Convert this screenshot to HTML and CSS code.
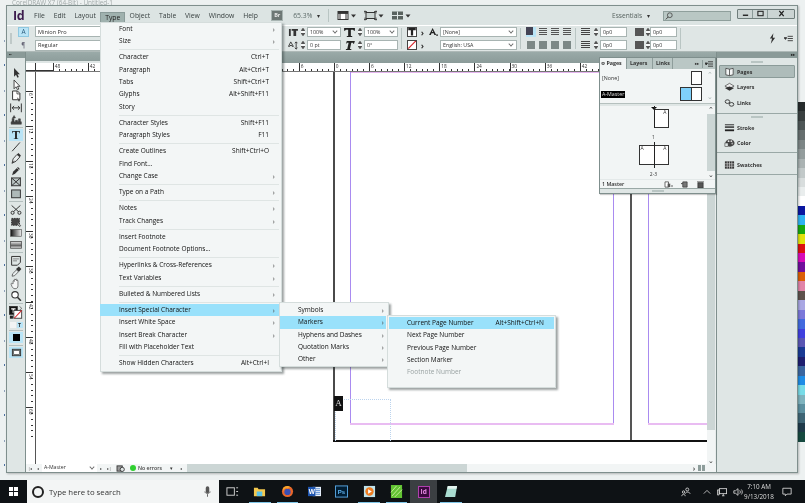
FILE: index.html
```html
<!DOCTYPE html>
<html lang="en">
<head>
<meta charset="utf-8">
<title>InDesign</title>
<link rel="stylesheet" href="styles.css">
</head>
<body>
<div class="desktop">
  <div class="behind-title">CorelDRAW X7 (64-Bit) - Untitled-1</div>
  <div class="left-strip"></div>
  <div class="palette">
    <i class="c1"></i><i class="c2"></i><i class="c3"></i><i class="c4"></i><i class="c5"></i><i class="c6"></i><i class="c7"></i><i class="c8"></i><i class="c9"></i><i class="c10"></i><i class="c11"></i>
    <i class="p1"></i><i class="p2"></i><i class="p3"></i><i class="p4"></i><i class="p5"></i><i class="p6"></i><i class="p7"></i><i class="p8"></i><i class="p9"></i><i class="p10"></i><i class="p11"></i><i class="p12"></i><i class="p13"></i><i class="p14"></i><i class="p15"></i><i class="p16"></i><i class="p17"></i><i class="p18"></i><i class="p19"></i><i class="p20"></i><i class="p21"></i><i class="p22"></i><i class="p23"></i><i class="p24"></i><i class="p25"></i>
  </div>

  <div class="window">
    <div class="menubar">
      <span class="logo">Id</span>
      <nav class="topmenu">
        <span>File</span><span>Edit</span><span>Layout</span><span class="open">Type</span><span>Object</span><span>Table</span><span>View</span><span>Window</span><span>Help</span>
      </nav>
      <span class="br">Br</span>
      <span class="zoomval">65.3%</span><span class="caret">▾</span>
      <span class="vsep"></span>
      <svg class="barico" viewBox="0 0 20 10"><rect x="1" y="1" width="10" height="8" fill="#fff" stroke="#333"/><rect x="1" y="1" width="10" height="2.4" fill="#333"/><path d="M3 1v8M9 1v8" stroke="#333"/><path d="M14 4h5l-2.5 3z" fill="#333"/></svg>
      <svg class="barico" viewBox="0 0 20 10"><rect x="2" y="2" width="9" height="6" fill="#ccd5d3" stroke="#333"/><path d="M0 1h3M0 9h3M10 1h3M10 9h3M1 0v3M1 7v3M12 0v3M12 7v3" stroke="#333" stroke-width=".8"/><path d="M14.5 4h5l-2.5 3z" fill="#333"/></svg>
      <svg class="barico" viewBox="0 0 20 10"><rect x="1" y="1" width="11" height="8" fill="#59625f"/><path d="M6.5 1v8M1 5h11" stroke="#dfe6e5"/><path d="M14.5 4h5l-2.5 3z" fill="#333"/></svg>
      <span class="spacer"></span>
      <span class="essentials">Essentials</span><span class="caret">▾</span>
      <span class="search"><svg viewBox="0 0 10 10"><circle cx="6" cy="4" r="3" fill="none" stroke="#444"/><path d="M4 6.2 1 9.2" stroke="#444" stroke-width="1.2"/></svg></span>
      <span class="winbtns">
        <span><svg viewBox="0 0 10 8"><path d="M2 6h6" stroke="#222" stroke-width="1.6"/></svg></span>
        <span><svg viewBox="0 0 10 8"><rect x="2" y="1.5" width="6" height="5" fill="none" stroke="#222" stroke-width="1.2"/></svg></span>
        <span class="wide"><svg viewBox="0 0 10 8"><path d="M2.5 1l5 6M7.5 1l-5 6" stroke="#222" stroke-width="1.5"/></svg></span>
      </span>
    </div>

    <div class="control">
      <div class="cgroup paramode">
        <span class="grip"></span>
        <div class="stack"><span class="modebtn on">A</span><span class="modebtn">¶</span></div>
      </div>
      <div class="stack fontboxes"><span class="field">Minion Pro</span><span class="field">Regular</span></div>
      <div class="stack c-a">
        <div class="crow"><svg class="t-ic" viewBox="0 0 11 10"><path d="M1 1h2v8H1zM4 1h7v2H9v6H6V3H4z" fill="#333"/></svg><span class="spin"></span><span class="field sm dd">100%<u></u></span></div>
        <div class="crow"><svg class="t-ic" viewBox="0 0 11 10"><path d="M3 1l-2.500 5h1.300l.4-1h2l.4 1h1.300zM9 1v8M7.500 7.500 9 9l1.500-1.500M7.500 2.500 9 1l1.500 1.500" fill="none" stroke="#333"/></svg><span class="spin"></span><span class="field sm">0 pt</span></div>
      </div>
      <div class="stack c-b">
        <div class="crow"><svg class="t-ic big" viewBox="0 0 12 10"><path d="M0 0h12v3h-1l-1-1H7.500v7H9v1H3V9h1.500V2H2L1 3H0z" fill="#222"/></svg><span class="spin"></span><span class="field sm dd">100%<u></u></span></div>
        <div class="crow"><svg class="t-ic big" viewBox="0 0 12 10"><path d="M3 0h9l-1 3h-1V2H8L6.500 9H8v1H2V9h1.500L5 2H3L2.500 3H2z" fill="#222"/></svg><span class="spin"></span><span class="field sm">0°</span></div>
      </div>
      <span class="vsep ctl"></span>
      <div class="stack c-c">
        <div class="crow"><span class="tbox"><svg viewBox="0 0 8 8"><path d="M0 0h8v2.500H5.200V8H2.800V2.500H0z" fill="#222"/></svg></span><span class="chev">›</span></div>
        <div class="crow"><span class="tbox"><svg viewBox="0 0 8 8"><path d="M0 8 8 0" stroke="#d8262c" stroke-width="1.200"/></svg></span><span class="chev">›</span></div>
      </div>
      <div class="stack c-d">
        <div class="crow"><svg class="t-ic aic" viewBox="0 0 10 9"><path d="M4 0 0 8h2l.8-2h2.400l.8 2h2zM3.300 4.500 4 2.500l.7 2z" fill="#222"/><circle cx="9" cy="8" r="1" fill="#222"/></svg><span class="field dd wide2">[None]<u></u></span></div>
        <div class="crow"><span class="aic-gap"></span><span class="field dd wide2">English: USA<u></u></span></div>
      </div>
      <span class="vsep ctl"></span>
      <div class="aligns">
        <i class="on"></i><i></i><i></i><i></i><i class="solid"></i><i class="solid"></i><i class="solid"></i><i class="solid"></i>
      </div>
      <span class="vsep ctl"></span>
      <div class="stack c-e">
        <div class="crow"><i class="ind"></i><span class="spin"></span><span class="field md">0p0</span><i class="ind i2"></i><span class="spin s2"></span><span class="field md">0p0</span></div>
        <div class="crow"><i class="ind"></i><span class="spin"></span><span class="field md">0p0</span><i class="ind i2"></i><span class="spin s2"></span><span class="field md">0p0</span></div>
      </div>
      <span class="vsep ctl"></span>
      <span class="spacer"></span>
      <svg class="bolt" viewBox="0 0 8 12"><path d="M5 0 1 6h2.500L2 12l5-7H4.300z" fill="#333"/></svg>
      <svg class="cmenu" viewBox="0 0 10 8"><path d="M0 3h3L1.500 5zM4 1.500h6M4 4h6M4 6.500h6" stroke="#333" fill="#333" stroke-width="1"/></svg>
    </div>

    <div class="workspace">
      <aside class="tools">
        <div class="dockhead"><b>••</b></div>
        <div class="tool-list">
          <svg class="tl" viewBox="0 0 12 12"><path d="M4 1v9l2-2 1.500 3 1.400-.7L7.500 7.500H10z" fill="#333"/></svg>
          <svg class="tl" viewBox="0 0 12 12"><path d="M4 1v9l2-2 1.500 3 1.400-.7L7.500 7.500H10z" fill="#fff" stroke="#333" stroke-width=".9"/></svg>
          <svg class="tl" viewBox="0 0 12 12"><path d="M2.500 1h5L10 3.500V10H2.500z" fill="#fff" stroke="#333"/><path d="M7 1v3h3M7 8l3 2.500-1.500.1.600 1.200" fill="none" stroke="#333" stroke-width=".8"/></svg>
          <svg class="tl" viewBox="0 0 12 12"><path d="M.5 1.500v9M11.500 1.500v9M2 6h8M2 6l2-2M2 6l2 2M10 6 8 4M10 6 8 8" fill="none" stroke="#333"/></svg>
          <svg class="tl" viewBox="0 0 12 12"><path d="M1 10.500h10.500V8H1zM2 8V4.500h2V8M5.500 8V6.500h2V8M8.500 8V5h2v3M4 1.500 2.500 4h3z" fill="#444" stroke="#333" stroke-width=".5"/></svg>
          <span class="tsep"></span>
          <span class="tl tbtn">T</span>
          <svg class="tl" viewBox="0 0 12 12"><path d="M2 10.500 10 1.500" stroke="#333"/></svg>
          <svg class="tl" viewBox="0 0 12 12"><path d="M2 10.500 3 6l4-4.500L10 4 6 8.500zM2 10.500l2.500-2.500" fill="#e8eded" stroke="#333" stroke-width=".9"/><path d="M7 1.500 8.500 0l2.500 2.500L10 4z" fill="#333"/></svg>
          <svg class="tl" viewBox="0 0 12 12"><path d="M2 10.500 3 7l5-5 2 2-5 5z" fill="#333"/><path d="M7 3l2 2" stroke="#fff" stroke-width=".6"/></svg>
          <svg class="tl" viewBox="0 0 12 12"><rect x="1.500" y="2" width="9" height="8" fill="#bcc6c5" stroke="#333"/><path d="M1.500 2l9 8M10.500 2l-9 8" stroke="#333"/></svg>
          <svg class="tl" viewBox="0 0 12 12"><rect x="1.500" y="2" width="9" height="8" fill="#aeb9b8" stroke="#333"/></svg>
          <span class="tsep"></span>
          <svg class="tl" viewBox="0 0 12 12"><circle cx="9.500" cy="9" r="1.600" fill="none" stroke="#333"/><circle cx="2.500" cy="9" r="1.600" fill="none" stroke="#333"/><path d="M3.500 7.800 10.500 1.500M8.500 7.800 1.500 1.500" stroke="#333"/></svg>
          <svg class="tl" viewBox="0 0 12 12"><rect x="1.500" y="2.500" width="8" height="7" fill="#444" stroke="#333" stroke-dasharray="1.500 1"/><path d="M7 6l4 4-1.600.1.600 1.400" fill="#fff" stroke="#222" stroke-width=".6"/></svg>
          <svg class="tl" viewBox="0 0 12 12"><defs><linearGradient id="g1"><stop offset="0" stop-color="#111"/><stop offset="1" stop-color="#eee"/></linearGradient><linearGradient id="g2" x1="0" x2="0" y1="0" y2="1"><stop offset="0" stop-color="#eee"/><stop offset=".6" stop-color="#666"/><stop offset="1" stop-color="#eee"/></linearGradient></defs><rect x=".5" y="2.500" width="11" height="7" fill="url(#g1)" stroke="#444" stroke-width=".6"/></svg>
          <svg class="tl" viewBox="0 0 12 12"><rect x=".5" y="2.500" width="11" height="7" fill="url(#g2)" stroke="#444" stroke-width=".8"/></svg>
          <span class="tsep"></span>
          <svg class="tl" viewBox="0 0 12 12"><path d="M1.500 1.500h9v6l-3 3h-6z" fill="#dfe6e5" stroke="#333"/><path d="M3 4h6M3 6h4" stroke="#555" stroke-width=".7"/></svg>
          <svg class="tl" viewBox="0 0 12 12"><path d="M2 10.500 2.500 8 6.500 4 8.500 6 4.500 10z" fill="#e8eded" stroke="#333" stroke-width=".7"/><path d="M6 3 9 0.500 11.500 3 9 6z" fill="#333"/></svg>
          <svg class="tl" viewBox="0 0 12 12"><path d="M3 6V3.500c0-1 1.200-1 1.200 0V2c0-1 1.300-1 1.300 0v-.2c0-1 1.300-1 1.300 0V3c0-1 1.200-1 1.200 0v5c0 2-1 3-3 3-1.700 0-2.300-1-3-2L1 6.500C.6 5.500 2 5 2.500 6z" fill="#f4f6f6" stroke="#444" stroke-width=".7"/></svg>
          <svg class="tl" viewBox="0 0 12 12"><circle cx="5" cy="5" r="3.300" fill="#fff" stroke="#333" stroke-width="1.100"/><path d="M7.500 7.500l3.500 3.500" stroke="#333" stroke-width="1.600"/></svg>
          <span class="tsep"></span>
          <svg class="tl-fs" viewBox="0 0 16 16"><rect x=".5" y=".5" width="9" height="9" fill="#111" stroke="#333"/><path d="M2.500 2.500h5v1.500H5.800v4H4.200V4H2.500z" fill="#fff"/><rect x="5.500" y="5" width="9" height="9" fill="#fff" stroke="#333"/><path d="M6 14 14.500 5" stroke="#d8262c" stroke-width="1.200"/><path d="M12 .5l2.500 2-2 2" fill="none" stroke="#333" stroke-width=".7"/><rect x="1" y="11" width="3.500" height="3.500" fill="#222"/></svg>
          <div class="modes"><i></i><i class="t">T</i></div>
          <span class="tsep"></span>
          <span class="tl hi"><b class="blk"></b></span>
          <span class="tsep"></span>
          <span class="tl hi"><svg viewBox="0 0 12 12"><rect x="1.500" y="2.500" width="9" height="7" fill="#9aa6a5" stroke="#333"/><rect x="3" y="4" width="6" height="4" fill="#fff" stroke="#333" stroke-width=".6"/></svg></span>
        </div>
      </aside>

      <section class="docpane">
        <div class="tabbar"><span class="doctab">*Untitled-1 @ 65%<em>×</em></span></div>
        <div class="hruler">
          <span class="origin"></span>
          <span class="rc">48</span><span class="rc">42</span><span class="rc"></span><span class="rc"></span><span class="rc"></span><span class="rc"></span><span class="rc"></span><span class="rc">6</span><span class="rc">0</span><span class="rc">6</span><span class="rc">12</span><span class="rc">18</span><span class="rc">24</span><span class="rc">30</span><span class="rc">36</span><span class="rc">42</span><span class="rc"></span><span class="rc"></span>
        </div>
        <div class="docmain">
          <div class="vruler">
            <span class="vc">6</span><span class="vc">12</span><span class="vc">18</span><span class="vc">24</span><span class="vc">30</span><span class="vc">36</span><span class="vc">42</span><span class="vc">48</span><span class="vc">54</span><span class="vc">60</span>
          </div>
          <div class="canvas">
            <span class="pg-left"></span><span class="pg-mid"></span><span class="pg-bottom"></span>
            <span class="m-top"></span><span class="m-l1"></span><span class="m-r1"></span><span class="m-l2"></span><span class="m-b1"></span><span class="m-b2"></span>
            <span class="frame"></span>
            <span class="amark">A</span>
          </div>
          <div class="vscroll"><span class="track"></span><span class="vchev">⌄</span></div>
        </div>
        <div class="status">
          <span class="pagebtns">|◂</span><span class="pagebtns">◂</span>
          <span class="pagebox">A-Master<u></u></span>
          <span class="pagebtns">▸</span><span class="pagebtns">▸|</span>
          <svg class="docic" viewBox="0 0 10 8"><rect x="1" y="1" width="6" height="6" fill="#999" stroke="#333"/><circle cx="7" cy="5" r="2.400" fill="#dfe6e5" stroke="#333"/></svg>
          <span class="greendot"></span><span class="noerr">No errors</span><span class="caret st">▾</span><span class="pagebtns st2">◂</span>
          <span class="hscroll"></span>
          <span class="pagebtns st3">›</span><span class="split"><i></i><i></i></span>
        </div>
      </section>

      <aside class="dock">
        <div class="dockhead right"><b>▸▸</b></div>
        <div class="dgroup first">
          <span class="handle"></span>
          <div class="ditem active"><svg viewBox="0 0 12 10"><path d="M6 2 2 1v7l4 1 4-1V1zM6 2v7" fill="#f4f6f6" stroke="#333" stroke-width=".8"/></svg>Pages</div>
          <div class="ditem"><svg viewBox="0 0 12 10"><path d="M6 1 1 4l5 2.500L11 4z" fill="#eee" stroke="#333" stroke-width=".7"/><path d="M1 6l5 3 5-3-5-1.500z" fill="#333"/></svg>Layers</div>
          <div class="ditem"><svg viewBox="0 0 12 10"><ellipse cx="3.800" cy="3.500" rx="2.500" ry="2" fill="none" stroke="#333"/><ellipse cx="8.200" cy="6.500" rx="2.500" ry="2" fill="none" stroke="#333"/></svg>Links</div>
        </div>
        <div class="dgroup">
          <span class="handle"></span>
          <div class="ditem"><svg viewBox="0 0 12 10"><path d="M1 1.500h10" stroke="#222"/><path d="M1 4h10" stroke="#222" stroke-width="1.500"/><path d="M1 7.500h10" stroke="#222" stroke-width="2"/></svg>Stroke</div>
          <div class="ditem"><svg viewBox="0 0 12 10"><ellipse cx="6.500" cy="5" rx="5" ry="4" fill="#444"/><circle cx="5" cy="3" r="1" fill="#eee"/><circle cx="8" cy="3" r="1" fill="#ddd"/><circle cx="9" cy="5.500" r="1" fill="#aaa"/><rect x="1" y="5" width="3.500" height="4" fill="#dfe6e5" stroke="#333" stroke-width=".6"/></svg>Color</div>
        </div>
        <div class="dgroup">
          <span class="handle none"></span>
          <div class="ditem"><svg viewBox="0 0 12 10"><rect x="1" y="1" width="10" height="8" fill="#333"/><path d="M1 3.700h10M1 6.300h10M3.500 1v8M6 1v8M8.500 1v8" stroke="#ddd" stroke-width=".7"/></svg>Swatches</div>
        </div>
      </aside>
    </div>
  </div>

  <div class="pagespanel">
    <div class="ptabs">
      <span class="ptab on">≎ Pages</span><span class="ptab">Layers</span><span class="ptab">Links</span>
      <span class="spacer"></span><span class="pmore">▸▸</span><span class="pbar"></span>
      <svg class="pmenu" viewBox="0 0 8 6"><path d="M0 2h2.500L1.200 4zM3 .8h5M3 3h5M3 5.200h5" stroke="#333" stroke-width=".9" fill="#333"/></svg>
    </div>
    <div class="masters">
      <div class="mrow"><span class="mname">[None]</span><span class="swatch"></span></div>
      <div class="mrow"><span class="mname sel">A-Master</span><span class="swatch blue"></span><span class="swatch"></span></div>
      <span class="mscroll up">⌃</span><span class="mscroll down">⌄</span>
    </div>
    <div class="pagesarea">
      <div class="pagelist">
        <span class="tri"></span>
        <div class="spread single"><span class="pp r"><em>A</em></span></div>
        <span class="plabel">1</span>
        <div class="spread double"><span class="pp l"><em>A</em></span><span class="pp r"><em>A</em></span></div>
        <span class="plabel">2-3</span>
      </div>
      <div class="pscroll"><span class="arr">⌃</span><span class="th"></span><span class="arr">⌄</span></div>
    </div>
    <div class="pfoot">
      <span>1 Master</span><span class="spacer"></span>
      <svg viewBox="0 0 10 8"><path d="M1 1h4v6H1z" fill="#fff" stroke="#333" stroke-width=".8"/><path d="M4 3h3v4H4z" fill="#555"/><path d="M8 5h2L9 7z" fill="#333"/></svg>
      <svg viewBox="0 0 10 8"><path d="M3 1h5v6H3z" fill="#777" stroke="#333" stroke-width=".8"/><path d="M1 3h2" stroke="#333"/></svg>
      <svg viewBox="0 0 10 8"><path d="M2 2h6v6H2zM1 1h8" fill="#555" stroke="#333" stroke-width=".8"/></svg>
    </div>
    <span class="phandle"></span>
  </div>

  <div class="menu m-main">
    <div class="mi"><span>Font</span><b>›</b></div>
    <div class="mi"><span>Size</span><b>›</b></div>
    <hr>
    <div class="mi"><span>Character</span><kbd>Ctrl+T</kbd></div>
    <div class="mi"><span>Paragraph</span><kbd>Alt+Ctrl+T</kbd></div>
    <div class="mi"><span>Tabs</span><kbd>Shift+Ctrl+T</kbd></div>
    <div class="mi"><span>Glyphs</span><kbd>Alt+Shift+F11</kbd></div>
    <div class="mi"><span>Story</span></div>
    <hr>
    <div class="mi"><span>Character Styles</span><kbd>Shift+F11</kbd></div>
    <div class="mi"><span>Paragraph Styles</span><kbd>F11</kbd></div>
    <hr>
    <div class="mi"><span>Create Outlines</span><kbd>Shift+Ctrl+O</kbd></div>
    <div class="mi"><span>Find Font...</span></div>
    <div class="mi"><span>Change Case</span><b>›</b></div>
    <hr>
    <div class="mi"><span>Type on a Path</span><b>›</b></div>
    <hr>
    <div class="mi"><span>Notes</span><b>›</b></div>
    <div class="mi"><span>Track Changes</span><b>›</b></div>
    <hr>
    <div class="mi"><span>Insert Footnote</span></div>
    <div class="mi"><span>Document Footnote Options...</span></div>
    <hr>
    <div class="mi"><span>Hyperlinks &amp; Cross-References</span><b>›</b></div>
    <div class="mi"><span>Text Variables</span><b>›</b></div>
    <hr>
    <div class="mi"><span>Bulleted &amp; Numbered Lists</span><b>›</b></div>
    <hr>
    <div class="mi hl"><span>Insert Special Character</span><b>›</b></div>
    <div class="mi"><span>Insert White Space</span><b>›</b></div>
    <div class="mi"><span>Insert Break Character</span><b>›</b></div>
    <div class="mi"><span>Fill with Placeholder Text</span></div>
    <hr>
    <div class="mi"><span>Show Hidden Characters</span><kbd>Alt+Ctrl+I</kbd></div>
  </div>

  <div class="menu m-sub1">
    <div class="mi"><span>Symbols</span><b>›</b></div>
    <div class="mi hl"><span>Markers</span><b>›</b></div>
    <div class="mi"><span>Hyphens and Dashes</span><b>›</b></div>
    <div class="mi"><span>Quotation Marks</span><b>›</b></div>
    <div class="mi"><span>Other</span><b>›</b></div>
  </div>

  <div class="menu m-sub2">
    <div class="mi hl"><span>Current Page Number</span><kbd>Alt+Shift+Ctrl+N</kbd></div>
    <div class="mi"><span>Next Page Number</span></div>
    <div class="mi"><span>Previous Page Number</span></div>
    <div class="mi"><span>Section Marker</span></div>
    <div class="mi dis"><span>Footnote Number</span></div>
  </div>

  <footer class="taskbar">
    <span class="start"><svg viewBox="0 0 10 10"><path d="M0 0h4.500v4.500H0zM5.500 0H10v4.500H5.500zM0 5.500h4.500V10H0zM5.500 5.500H10V10H5.500z" fill="#fff"/></svg></span>
    <div class="tsearch">
      <span class="cortana"></span>
      <span class="tstext">Type here to search</span>
      <span class="spacer"></span>
      <svg class="mic" viewBox="0 0 8 12"><rect x="2" y="0" width="4" height="8" rx="2" fill="#555"/><path d="M1 6c0 3 6 3 6 0M4 9v3" fill="none" stroke="#555"/></svg>
    </div>
    <div class="apps">
      <span class="app"><svg viewBox="0 0 14 12"><rect x="1" y="2" width="8" height="8" fill="none" stroke="#d5d5d5"/><path d="M11 2h2M11 6h2M11 10h2" stroke="#d5d5d5"/></svg></span>
      <span class="app run"><svg viewBox="0 0 14 12"><path d="M1 2h4l1 1.500h7V11H1z" fill="#f3c84e"/><rect x="4" y="6" width="6" height="5" fill="#5cc3e8"/></svg></span>
      <span class="app run"><svg viewBox="0 0 14 14"><circle cx="7" cy="7" r="6" fill="#e8662a"/><circle cx="7" cy="7.500" r="3.400" fill="#3a4fb4"/><path d="M2 4c1-3 6-4 9-1-2-.7-3 0-3.500 1C5 3 3 4 3 7z" fill="#f7a52b"/></svg></span>
      <span class="app"><svg viewBox="0 0 14 14"><rect x="5" y="2" width="9" height="10" fill="#e8f0fa"/><path d="M8 4h5M8 6h5M8 8h5M8 10h5" stroke="#5b8fd6"/><rect x="0" y="2" width="8" height="10" fill="#1f56b0"/><text x="4" y="9.500" class="wtxt">W</text></svg></span>
      <span class="app"><svg viewBox="0 0 14 14"><rect x=".5" y="1" width="13" height="12" fill="#001d33" stroke="#5aa9e6"/><text x="7" y="9.800" class="pstxt">Ps</text></svg></span>
      <span class="app run"><svg viewBox="0 0 14 14"><rect x="1" y="1" width="12" height="12" fill="#bfe3ec"/><circle cx="7" cy="7" r="4.500" fill="#ee7d22"/><path d="M5.500 4.500v5L9.500 7z" fill="#fff"/></svg></span>
      <span class="app run"><svg viewBox="0 0 14 14"><rect x="1" y="0" width="12" height="14" fill="#62c333"/><path d="M2 12 11 2M5 13 13 5M1 8l6-7" stroke="#c7ef9a" stroke-width="1"/></svg></span>
      <span class="app active"><span class="idapp">Id</span></span>
      <span class="app run"><svg viewBox="0 0 14 14"><path d="M3 1h10l-2 12H0z" fill="#a9dcd0"/><path d="M3 1h10l-.6 3H2.300z" fill="#e4f5f0"/></svg></span>
    </div>
    <span class="spacer"></span>
    <div class="tray">
      <svg class="tr-i" viewBox="0 0 12 12"><circle cx="7.500" cy="3" r="1.800" fill="none" stroke="#ddd"/><circle cx="3" cy="6" r="1.400" fill="none" stroke="#ddd"/><path d="M1 11c0-3 4-3 4 0M5 8c.5-2.500 5-2.500 6 0" fill="none" stroke="#ddd"/></svg>
      <svg class="tr-i chevup" viewBox="0 0 10 10"><path d="M1 7l4-4 4 4" fill="none" stroke="#ddd"/></svg>
      <svg class="tr-i" viewBox="0 0 12 12"><rect x="3" y="2" width="8.500" height="6" fill="none" stroke="#ddd"/><path d="M6 10.500h3M7.500 8v2.500M.5 3.500h2v6h-2z" fill="none" stroke="#ddd"/></svg>
      <svg class="tr-i" viewBox="0 0 12 12"><path d="M1 4.500h2l3-2.500v8L3 7.500H1z" fill="none" stroke="#ddd"/><path d="M8 4c1 1 1 3 0 4M10 3c1.500 1.500 1.500 4.500 0 6" fill="none" stroke="#ddd"/></svg>
      <div class="clock"><span>7:10 AM</span><span>9/13/2018</span></div>
      <svg class="tr-i note" viewBox="0 0 12 12"><path d="M1 1.500h10v7H6l-2 2v-2H1z" fill="none" stroke="#ddd"/></svg>
    </div>
  </footer>
</div>
</body>
</html>
```

FILE: styles.css
```css
* { box-sizing: border-box; }
html, body { margin: 0; padding: 0; }
body { width: 805px; height: 503px; overflow: hidden; background: #e9eeee; font-family: "Open Sans", "Noto Sans", sans-serif; }
.spacer { flex: 1; }
.desktop { position: relative; width: 805px; height: 503px; display: flex; flex-direction: column; overflow: hidden; background: #edf1f1; filter: blur(.3px); }

.behind-title { position: absolute; left: 12px; top: 0; font-size: 6.400px; color: #a2aaaa; line-height: 5px; }
.left-strip { position: absolute; left: 4px; top: 40px; width: 1px; height: 430px; background: repeating-linear-gradient(180deg, #8ea0b8 0 2px, transparent 2px 24px, #4a6fa0 24px 26px, transparent 26px 50px); }
.palette { position: absolute; left: 798px; top: 102px; width: 7px; display: flex; flex-direction: column; }
.palette i { display: block; height: 9.45px; }
.c1 { background: #262b2c; } .c2 { background: #3a4040; } .c3 { background: #4e5656; } .c4 { background: #666e6e; } .c5 { background: #7d8686; } .c6 { background: #949d9d; } .c7 { background: #abb3b3; } .c8 { background: #c2c9c9; } .c9 { background: #d8dddd; } .c10 { background: #e9eded; } .c11 { background: #fff; }
.p1 { background: #0a16a0; } .p2 { background: #2fb2f2; } .p3 { background: #17a80f; } .p4 { background: #e2e20c; } .p5 { background: #dc1010; } .p6 { background: #d80cb8; } .p7 { background: #700f9c; } .p8 { background: #dc5f07; } .p9 { background: #e184a8; } .p10 { background: #5e514c; } .p11 { background: #a9a7e3; } .p12 { background: #7b78da; } .p13 { background: #426adf; } .p14 { background: #4040df; } .p15 { background: #5a56b4; } .p16 { background: #1a3a94; } .p17 { background: #1f1f70; } .p18 { background: #3a66a0; } .p19 { background: #1f8de6; } .p20 { background: #78dce8; } .p21 { background: #7fb4bf; } .p22 { background: #5c90a0; } .p23 { background: #3e6575; } .p24 { background: #1f3a4a; } .p25 { background: #164a40; }

.window { margin: 5px 7px 0 6px; height: 468px; flex: none; background: #dfe6e5; border: 1px solid #7f8f8d; display: flex; flex-direction: column; position: relative; box-shadow: 1px 1px 2px rgba(0,0,0,.25); }

.menubar { height: 19px; flex: none; display: flex; align-items: center; background: #dce4e3; font-size: 6.800px; color: #333; padding-left: 6px; }
.logo { width: 16.700px; font-weight: 700; font-size: 12.500px; color: #3d1c4e; letter-spacing: -.3px; }
.topmenu { display: flex; align-items: center; height: 100%; color: #3a4242; }
.topmenu span { padding: 0 4.400px; display: block; line-height: 11px; }
.topmenu .open { background: #9fb1ae; border: 1px solid #8a9b99; border-bottom: 0; line-height: 10px; padding: 0 3.900px; color: #222; align-self: flex-end; height: 13px; }
.br { margin-left: 10px; width: 10px; height: 9px; background: #6d7775; color: #e8e8e8; font-size: 5.500px; line-height: 9px; text-align: center; font-weight: 700; outline: 1px solid #a8b4b2; }
.zoomval { margin-left: 11px; width: 24px; color: #5d6b69; font-size: 6.800px; }
.caret { font-size: 6px; color: #333; width: 8px; }
.vsep { width: 1px; height: 13px; background: #b9c5c3; margin: 0 8px 0 3px; }
.barico { width: 20px; height: 11px; margin-right: 7px; }
.essentials { color: #57625f; font-size: 6.600px; width: 35px; }
.search { width: 68px; height: 10px; margin-left: 8px; background: #b9c7c4; border: 1px solid #8f9f9c; display: flex; align-items: center; padding-left: 1px; }
.search svg { width: 8px; height: 8px; }
.winbtns { margin: 0 2px 4px 6px; display: flex; border: 1px solid #6f7d7b; border-radius: 1px; background: #cbd4d3; height: 10px; }
.winbtns span { width: 15px; border-right: 1px solid #8b9a98; display: flex; align-items: center; justify-content: center; }
.winbtns span.wide { width: 26px; border: 0; }
.winbtns svg { width: 9px; height: 7px; }

.control { height: 27px; flex: none; display: flex; align-items: center; background: #dfe6e5; border-top: 1px solid #fff; border-bottom: 1px solid #aeb9b7; padding-left: 3px; font-size: 5.300px; color: #333; }
.stack { display: flex; flex-direction: column; gap: 2.500px; }
.cgroup { display: flex; align-items: center; }
.grip { width: 2px; height: 11px; background: #bfc9c8; margin-right: 6px; }
.modebtn { width: 11px; height: 10px; display: block; text-align: center; font-size: 6.500px; line-height: 10px; color: #667; }
.modebtn.on { background: #b9e4f6; border: 1px solid #8fc8e0; line-height: 8px; color: #2c5c7c; }
.field { display: flex; align-items: center; position: relative; height: 10px; background: #fff; border: 1px solid #a8b4b2; padding-left: 2px; line-height: 8px; white-space: nowrap; color: #333; }
.fontboxes { margin-left: 6px; width: 247px; }
.fontboxes .field { padding-left: 2px; font-size: 5.600px; height: 11px; }
.crow { display: flex; align-items: center; height: 10.500px; }
.c-a { margin-left: 6px; }
.c-b { margin-left: 3px; }
.c-d { margin-left: 1px; }
.t-ic { width: 10px; height: 9px; margin-right: 3px; }
.t-ic.big { width: 11px; margin-right: 3px; }
.spin { width: 4px; height: 9px; margin-right: 2px; background: linear-gradient(180deg, #555 0 3px, #f7f9f9 3px 5px, #555 5px 8px, transparent 8px); clip-path: polygon(50% 0, 100% 32%, 100% 68%, 50% 100%, 0 68%, 0 32%); }
.spin.s2 { margin-right: 0; }
.field.sm { width: 34px; }
.field.md { width: 27px; }
.field.dd u, .pagebox u { position: absolute; right: 3px; top: 1px; width: 4px; height: 4px; border-right: 1px solid #666; border-bottom: 1px solid #666; transform: rotate(45deg) scale(.9); }
.field.wide2 { width: 77px; }
.ctl { height: 21px; margin: 0 5px 0 3px; }
.tbox { width: 10px; height: 9.500px; background: #fff; border: 1px solid #444; display: flex; }
.tbox svg { width: 100%; height: 100%; }
.chev { width: 11px; font-size: 9px; line-height: 9px; text-align: center; font-weight: 700; }
.aic { width: 9px; height: 8px; margin-right: 2px; }
.aic-gap { width: 11px; }
.aligns { display: grid; grid-template-columns: repeat(4, 10px); grid-auto-rows: 10px; gap: 3px 2px; }
.aligns i { display: block; background: repeating-linear-gradient(180deg, #555 0 1px, transparent 1px 2px); margin: 1px; }
.aligns i.on { background: #b9e4f6; margin: 0; box-shadow: inset -3px -2px 0 #b9e4f6, inset 7px 8px 0 #445; }
.aligns i.solid { background: #7c8886; }
.ind { width: 9px; height: 8px; margin-right: 4px; background: repeating-linear-gradient(180deg, #444 0 1px, transparent 1px 2px); }
.ind.i2 { margin: 0 2px 0 8px; background: #555; }
.bolt { width: 7px; height: 11px; margin-right: 8px; }
.cmenu { width: 9px; height: 7px; margin-right: 4px; }

.workspace { flex: 1; display: flex; min-height: 0; }
.dockhead { height: 6px; background: #8a9a98; color: #222; font-size: 3.500px; line-height: 6px; padding-left: 2px; }
.dockhead b { font-weight: 700; }
.dockhead.right { text-align: right; padding-right: 2px; }
.tools { width: 19px; flex: none; background: #dfe6e5; border-right: 1px solid #7f8f8d; }
.tool-list { display: flex; flex-direction: column; align-items: center; padding-top: 9px; }
.tl { width: 14px; height: 11.700px; display: flex; align-items: center; justify-content: center; flex: none; }
.tl svg { width: 11px; height: 11px; }
.tbtn { background: #b9e4f6; font-family: "Liberation Serif", serif; font-size: 12px; font-weight: 700; color: #222; height: 12px; }
.tsep { width: 14px; height: 1px; background: #b4bfbe; margin: 1.600px 0 1.400px; flex: none; }
.tl-fs { width: 14px; height: 16px; }
.modes { display: flex; gap: 1px; height: 6px; width: 13px; margin-top: 1px; }
.modes i { flex: 1; background: #f2f4f4; font-style: normal; font-size: 5px; line-height: 6px; text-align: center; color: #222; font-weight: 700; }
.modes i.t { background: #b9e4f6; }
.tl.hi { background: #b9e4f6; height: 11px; }
.blk { width: 7px; height: 7px; background: #000; display: block; }

.docpane { flex: 1; min-width: 0; display: flex; flex-direction: column; background: #fff; }
.tabbar { height: 11px; flex: none; background: linear-gradient(180deg, #9aaaa8, #8b9b99); }
.doctab { display: inline-flex; align-items: center; justify-content: space-between; width: 74px; height: 11px; background: #dfe6e5; padding: 0 3px; font-size: 6.300px; font-weight: 600; color: #333; }
.doctab em { font-style: normal; font-size: 7px; }
.hruler { height: 9px; flex: none; display: flex; background: #fff; border-bottom: 1px solid #777; overflow: hidden; }
.origin { width: 26.700px; flex: none; background: linear-gradient(#333,#333) 9px 0/1px 100% no-repeat, linear-gradient(#333,#333) 0 7px/100% 1px no-repeat; }
.rc { width: 35.150px; flex: none; border-left: 1px solid #333; font-size: 4.800px; line-height: 6px; padding-left: 1px; color: #333; background: repeating-linear-gradient(90deg, transparent 0 4.850px, #333 4.850px 5.850px) 0 100%/100% 2px no-repeat; }

.docmain { flex: 1; min-height: 0; display: flex; }
.vruler { width: 10px; flex: none; border-right: 1px solid #555; padding-top: 19px; overflow: hidden; background: #fff; }
.vc { display: block; height: 35.100px; border-top: 1px solid #333; font-size: 4.800px; line-height: 5px; padding-left: 2px; padding-top: 1px; color: #333; writing-mode: vertical-rl; background: repeating-linear-gradient(180deg, transparent 0 4.850px, #333 4.850px 5.850px) 100% 0/2px 100% no-repeat; }
.canvas { flex: 1; position: relative; background: #fff; overflow: hidden; }
.canvas > span { position: absolute; display: block; }
.pg-left { left: 297px; top: 0; width: 2px; height: 369px; background: #4a4a4a; }
.pg-mid { left: 594px; top: 0; width: 2px; height: 369px; background: #555; }
.pg-bottom { left: 297px; top: 368px; width: 377px; height: 2px; background: #111; }
.m-top { left: 314px; top: 0; width: 360px; height: 1px; background: #e5b5ef; }
.m-l1 { left: 314px; top: 0; width: 1px; height: 352px; background: #a98bf0; }
.m-r1 { left: 577px; top: 0; width: 1px; height: 352px; background: #a98bf0; }
.m-l2 { left: 612px; top: 0; width: 1px; height: 352px; background: #a98bf0; }
.m-b1 { left: 314px; top: 351px; width: 264px; height: 2px; background: #e9bcf2; }
.m-b2 { left: 612px; top: 351px; width: 62px; height: 2px; background: #e9bcf2; }
.frame { left: 299px; top: 327px; width: 56px; height: 42px; border: 1px dotted #bcd4ee; border-bottom: 0; }
.amark { left: 298px; top: 324px; width: 9px; height: 15px; background: #111; color: #ddd; font-family: "Liberation Serif", serif; font-size: 9px; line-height: 15px; text-align: center; }
.vscroll { width: 9px; flex: none; background: #f2f5f5; display: flex; flex-direction: column; border-right: 1px solid #e8ecec; }
.track { height: 358px; background: #ccd6d5; display: block; }
.vchev { margin-top: auto; text-align: center; font-size: 7px; line-height: 7px; color: #333; }

.status { height: 8px; flex: none; display: flex; align-items: center; background: #f2f5f5; font-size: 5px; color: #444; overflow: hidden; }
.pagebtns { width: 8px; font-size: 4px; text-align: center; color: #555; }
.pagebox { position: relative; width: 55px; height: 8px; background: #fff; font-size: 5.200px; line-height: 7px; padding-left: 2px; color: #333; }
.docic { width: 9px; height: 7px; margin: 0 5px 0 3px; }
.greendot { width: 6px; height: 6px; border-radius: 50%; background: #30d030; margin-right: 2px; flex: none; }
.noerr { width: 32px; font-size: 5.200px; font-weight: 600; white-space: nowrap; }
.caret.st { font-size: 5px; width: 8px; }
.st2 { width: 6px; }
.hscroll { width: 280px; height: 8px; background: #ccd6d5; margin-left: 3px; }
.st3 { margin-left: auto; font-size: 7px; font-weight: 700; }
.split { display: flex; gap: 1px; margin-right: 11px; }
.split i { width: 3px; height: 6px; background: #8e9d9b; display: block; }

.dock { width: 81px; flex: none; background: #dfe6e5; border-left: 1px solid #7f8f8d; font-size: 5.300px; font-weight: 700; color: #333; }
.dgroup { border-bottom: 1px solid #9aa8a6; display: flex; flex-direction: column; padding-bottom: 1px; }
.handle { width: 12px; height: 2px; background: #b9c5c3; margin: 2px auto; display: block; flex: none; }
.first .handle { margin: 3px auto 2px; }
.first { padding-bottom: 2px; }
.handle.none { background: transparent; margin: 1px auto; }
.ditem { display: flex; align-items: center; height: 15.700px; padding-left: 5px; margin: 0 2px; }
.ditem svg { width: 11px; height: 10px; margin-right: 2px; }
.ditem.active { background: #aebcba; border: 1px solid #8b9b99; height: 13px; margin-bottom: 1.500px; padding-left: 4px; border-radius: 1px; }

.pagespanel { position: absolute; left: 599px; top: 57px; width: 117px; height: 137px; background: #f2f5f5; border: 1px solid #7f8f8d; display: flex; flex-direction: column; font-size: 5.300px; color: #333; box-shadow: 1px 1px 1px rgba(0,0,0,.2); }
.ptabs { display: flex; height: 11px; flex: none; align-items: center; background: #bac7c5; font-weight: 700; }
.ptab { height: 11px; line-height: 10px; padding: 0 3px; border-right: 1px solid #8e9d9b; width: 26px; white-space: nowrap; }
.ptab.on { background: #f2f5f5; width: 27px; padding: 0 1px; }
.ptab:nth-child(3) { width: 20px; }
.pmore { font-size: 4px; margin-right: 3px; }
.pbar { width: 1px; height: 8px; background: #8e9d9b; margin-right: 2px; }
.pmenu { width: 8px; height: 6px; margin-right: 2px; }
.masters { height: 35px; flex: none; position: relative; border-bottom: 1px solid #b5c0be; display: flex; flex-direction: column; justify-content: space-between; padding: 2px 13px 2px 1px; }
.mrow { display: flex; align-items: center; justify-content: flex-end; height: 14px; }
.mname { margin-right: auto; padding: 0 1px; line-height: 7px; }
.mname.sel { background: #000; color: #ddd; }
.swatch { width: 11px; height: 14px; background: #fff; border: 1px solid #333; display: block; }
.swatch.blue { background: #7fd0fa; border-right: 0; }
.mscroll { position: absolute; right: 2px; font-size: 7px; line-height: 6px; color: #a8b4b2; }
.mscroll.up { top: 3px; } .mscroll.down { bottom: 3px; }
.pagesarea { flex: 1; display: flex; min-height: 0; border-top: 2px solid #dfe6e5; }
.pagelist { flex: 1; display: flex; flex-direction: column; align-items: center; }
.tri { width: 0; height: 0; border: 3px solid transparent; border-top: 3px solid #111; border-bottom: 0; margin-top: 1px; margin-bottom: -1px; }
.spread { display: flex; height: 19px; flex: none; }
.single { margin-left: 15px; }
.double { margin-top: 4px; height: 20px; }
.pp { width: 15px; height: 100%; background: #fff; border: 1px solid #333; position: relative; display: block; }
.pp.l { border-right: 0; }
.pp.r::before { content: ""; position: absolute; left: -1px; top: -4px; bottom: -1px; width: 1px; background: #222; }
.double .pp.r::before { bottom: -4px; }
.pp em { position: absolute; top: -1px; font-style: normal; font-size: 5px; line-height: 7px; }
.pp.r em { right: 1px; } .pp.l em { left: 1px; }
.plabel { font-size: 5px; line-height: 7px; margin-top: 6px; }
.pscroll { width: 8px; flex: none; display: flex; flex-direction: column; text-align: center; }
.arr { font-size: 7px; line-height: 8px; color: #333; }
.th { flex: 1; background: #ccd6d5; }
.pfoot { height: 9px; flex: none; display: flex; align-items: center; padding: 0 10px 0 2px; border-top: 1px solid #e4e9e9; font-weight: 600; }
.pfoot svg { width: 9px; height: 7px; margin-left: 7px; }
.phandle { height: 5px; flex: none; background: linear-gradient(#b9c5c3,#b9c5c3) center/12px 2px no-repeat #dfe6e5; border-top: 1px solid #9aa8a6; }

.menu { position: absolute; background: #f3f6f6; border: 1px solid #d5dddc; box-shadow: 2px 2px 2px rgba(40,50,50,.45); font-size: 6.500px; color: #111; z-index: 5; }
.m-main { left: 100px; top: 22px; width: 182px; height: 350px; }
.m-sub1 { left: 279px; top: 302px; width: 110px; height: 65px; padding-top: 1px; }
.m-sub2 { left: 387px; top: 315px; width: 169px; height: 73px; padding-top: 1px; }
.menu hr { margin: 1.650px 2px 1.250px 18px; border: 0; border-top: 1px solid #dfe5e4; height: 0; }
.mi { height: 12.300px; line-height: 12.300px; display: flex; justify-content: space-between; padding: 0 6px 0 18px; white-space: nowrap; }
.mi b { font-weight: 400; font-size: 8px; color: #555; line-height: 11px; }
.mi kbd { font: inherit; padding-right: 6px; }
.mi.hl { background: #99e1fb; }
.mi.dis { color: #9aa3a3; }
.m-main .mi.hl { margin-left: -1px; padding-left: 19px; }
.m-sub1 .mi { padding-right: 4px; }
.m-sub1 .mi.hl { margin-right: 2px; padding-right: 2px; }
.m-sub2 .mi { padding-left: 18px; margin: 0 1px; }
.m-sub2 kbd { padding-right: 4px; }

.taskbar { position: absolute; left: 0; right: 0; bottom: 0; height: 23px; background: #0e1215; display: flex; align-items: stretch; color: #ddd; }
.start { width: 27px; display: flex; align-items: center; justify-content: center; }
.start svg { width: 9px; height: 9px; }
.tsearch { width: 192px; background: #f3f5f5; display: flex; align-items: center; padding-left: 5px; color: #333; font-size: 7.800px; }
.cortana { width: 12px; height: 12px; border-radius: 50%; border: 2px solid #222; margin-right: 5px; flex: none; }
.mic { width: 7px; height: 11px; margin-right: 8px; }
.apps { display: flex; }
.app { width: 27.300px; display: flex; align-items: center; justify-content: center; position: relative; }
.app svg { width: 13px; height: 13px; }
.app.run::after { content: ""; position: absolute; left: 3px; right: 3px; bottom: 0; height: 1px; background: #7fc6e8; }
.app.active { background: #3b3f42; }
.idapp { width: 12px; height: 12px; background: #3b0a3e; border: 1px solid #b03fae; color: #e88be4; font-size: 6.500px; font-weight: 700; line-height: 10px; text-align: center; }
.wtxt { font-size: 7px; fill: #fff; text-anchor: middle; font-weight: 700; font-family: "Liberation Sans", sans-serif; }
.pstxt { font-size: 6.500px; fill: #5eb3f0; text-anchor: middle; font-weight: 700; font-family: "Liberation Sans", sans-serif; }
.tray { display: flex; align-items: center; padding-right: 13px; }
.tr-i { width: 10px; height: 10px; margin-right: 6px; flex: none; }
.tr-i.chevup { margin-left: 6px; width: 8px; }
.clock { display: flex; flex-direction: column; align-items: center; font-size: 6.300px; line-height: 9.500px; width: 30px; margin: 0 8px 0 -5px; }
.tr-i.note { margin-right: 0; }
```
